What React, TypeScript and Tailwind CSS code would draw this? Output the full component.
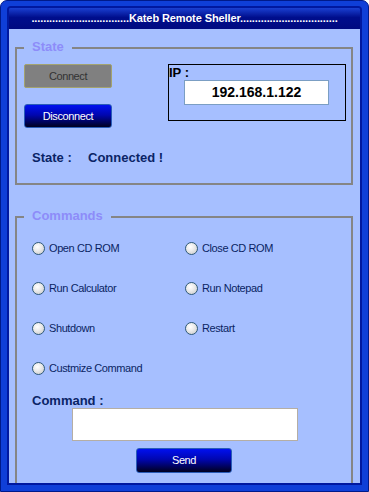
import React from 'react';

const font = { fontFamily: '"Liberation Sans", Arial, sans-serif' };

const RADIOS: [string, string | null][] = [
  ['Open CD ROM', 'Close CD ROM'],
  ['Run Calculator', 'Run Notepad'],
  ['Shutdown', 'Restart'],
  ['Custmize Command', null],
];

function Radio({ label }: { label: string }) {
  return (
    <label className="flex items-center gap-[4px] h-[13px] cursor-pointer">
      <span className="inline-block w-[13px] h-[13px] rounded-full border border-[#2f5a78] bg-[radial-gradient(circle_at_40%_35%,#ffffff_0%,#ececec_40%,#c4c4c4_100%)]" />
      <span className="text-[11px] leading-[13px] tracking-[-0.4px] text-[#0a1f63]">{label}</span>
    </label>
  );
}

function GroupBox({ title, className, children }: { title: string; className: string; children: React.ReactNode }) {
  return (
    <div className={`relative border-2 border-[#858585] ${className}`}>
      {/* legend sits over the top border */}
      <span className="absolute -top-[10px] left-[7px] px-[8px] bg-[#a6bfff] text-[13px] leading-[16px] font-bold text-[#8d8cf9]">
        {title}
      </span>
      {children}
    </div>
  );
}

export default function App() {
  const dots = '.................................';

  return (
    <div style={font} className="w-[369px] h-[492px] bg-[#0f3fd8] border border-[#001a8a] rounded-t-[7px] px-[6px] pt-[5px] pb-[6px]">
      <div className="h-full flex flex-col border-2 border-[#0018a0] rounded-t-[4px] overflow-hidden">
        {/* Title bar */}
        <div className="h-[21px] shrink-0 flex items-center justify-center bg-[linear-gradient(#1a40d2_0%,#000e8c_45%,#000a80_100%)]">
          <span className="text-white text-[11px] font-bold leading-none tracking-[-0.1px]">
            {dots}Kateb Remote Sheller{dots}
          </span>
        </div>

        {/* Content */}
        <div className="flex-1 bg-[#a6bfff] overflow-hidden">
          <GroupBox title="State" className="ml-[6px] mt-[18px] w-[338px] h-[138px]">
            <div className="flex">
              <div className="ml-[7px] mt-[15px] w-[88px] flex flex-col gap-[16px]">
                <button className="h-[24px] rounded-[2px] bg-[#808080] border border-[#a3a36f] text-[11px] tracking-[-0.4px] text-[#333333]">
                  Connect
                </button>
                <button className="h-[24px] rounded-[3px] bg-[linear-gradient(#0010f0_0%,#0006b0_45%,#000020_100%)] border border-[#2a5cb8] text-[11px] tracking-[-0.4px] text-white">
                  Disconnect
                </button>
              </div>
              <div className="ml-[56px] mt-[15px] w-[178px] h-[57px] border border-black">
                <div className="h-[15px] text-[13px] leading-[15px] font-bold text-black">IP :</div>
                <div className="ml-[15px] w-[145px] h-[25px] bg-white border border-[#7b9ec3] flex items-center justify-center text-[14px] font-bold text-black">
                  192.168.1.122
                </div>
              </div>
            </div>
            <div className="ml-[15px] mt-[22px] flex text-[13px] leading-[16px] font-bold text-[#0a2466]">
              <span className="w-[56px]">State :</span>
              <span>Connected !</span>
            </div>
          </GroupBox>

          <GroupBox title="Commands" className="ml-[6px] mt-[31px] w-[338px] h-[300px]">
            <div className="pl-[15px] pt-[24px] flex flex-col gap-[27px]">
              {RADIOS.map(([a, b]) => (
                <div key={a} className="grid grid-cols-[153px_1fr]">
                  <Radio label={a} />
                  {b ? <Radio label={b} /> : <span />}
                </div>
              ))}
            </div>
            <div className="ml-[15px] mt-[18px] text-[13px] leading-[15px] font-bold text-[#0a2466]">Command :</div>
            <div className="ml-[55px] w-[226px] h-[33px] bg-white border border-[#b5aea4]" />
            <button className="ml-[119px] mt-[7px] w-[96px] h-[25px] rounded-[3px] bg-[linear-gradient(#0010f0_0%,#0006b0_45%,#000020_100%)] border border-[#2a5cb8] text-[11px] tracking-[-0.4px] text-white">
              Send
            </button>
          </GroupBox>
        </div>
      </div>
    </div>
  );
}
